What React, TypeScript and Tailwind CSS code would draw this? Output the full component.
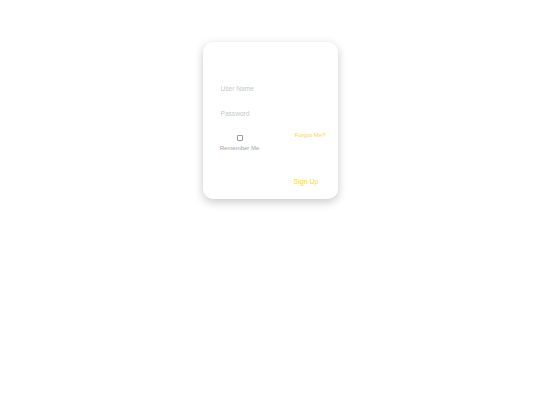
import { useState } from "react";

export default function App() {
  const [user, setUser] = useState("");
  const [pass, setPass] = useState("");
  const [remember, setRemember] = useState(false);

  return (
    <div className="min-h-[405px] w-full bg-white pt-[42px] font-['Liberation_Sans',Arial,sans-serif]">
      <div className="mx-auto h-[157px] w-[135px] rounded-[10px] bg-white shadow-[0_3px_10px_rgba(0,0,0,0.22)]">
        <div className="pl-[18px] pr-[12px] pt-[40px]">
          <input
            value={user}
            onChange={(e) => setUser(e.target.value)}
            placeholder="User Name"
            className="block h-[14px] w-full bg-transparent text-[6.6px] leading-[14px] text-gray-700 outline-none placeholder:text-[#c8c8c8]"
          />
          <input
            type="password"
            value={pass}
            onChange={(e) => setPass(e.target.value)}
            placeholder="Password"
            className="mt-[11px] block h-[14px] w-full bg-transparent text-[6.6px] leading-[14px] text-gray-700 outline-none placeholder:text-[#c8c8c8]"
          />

          <div className="mt-[10px] flex h-[23px] items-start justify-between">
            <label className="flex w-[38px] flex-col items-center pt-[3.5px]">
              <input
                type="checkbox"
                checked={remember}
                onChange={(e) => setRemember(e.target.checked)}
                className="h-[6px] w-[6px] appearance-none rounded-[1px] border border-[#9a9a9a] bg-white"
              />
              <span className="mt-[3px] whitespace-nowrap text-[6px] leading-[8px] text-[#a5a5a5]">
                Remember Me
              </span>
            </label>
            <a href="#" className="whitespace-nowrap text-[6px] leading-[9px] text-[#fcd447]">
              Forgot Me?
            </a>
          </div>

          <div className="mt-[23px] flex justify-end pr-[7px]">
            <button type="button" className="text-[7px] leading-[10px] text-[#fcd447]">
              Sign Up
            </button>
          </div>
        </div>
      </div>
    </div>
  );
}
